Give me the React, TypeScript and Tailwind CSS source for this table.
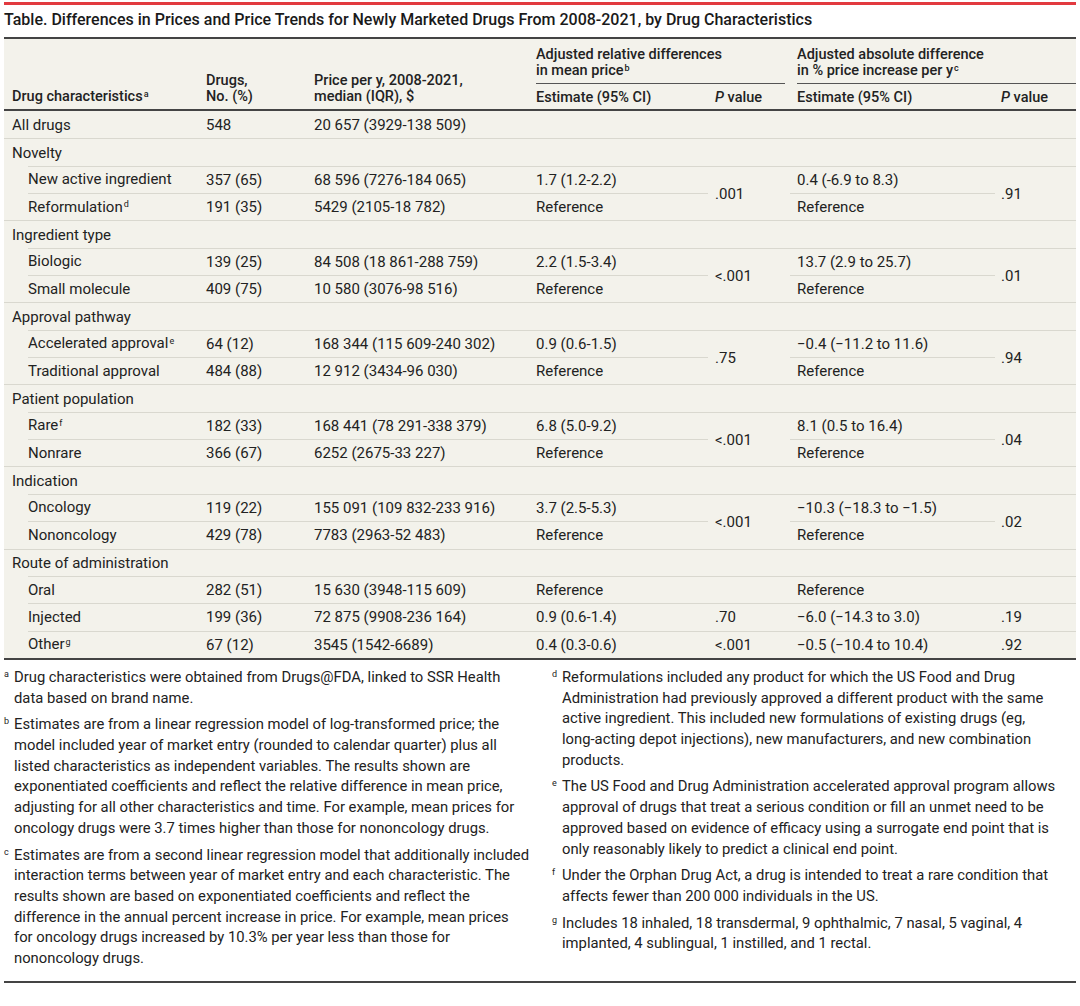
import type { ReactNode } from "react";

type SubRow = {
  label: string;
  sup?: string;
  n: string;
  price: string;
  e1: string;
  e2: string;
  p1?: string;
  p2?: string;
};

type Group = {
  title: string;
  p1?: string;
  p2?: string;
  rows: SubRow[];
};

const groups: Group[] = [
  {
    title: "Novelty",
    p1: ".001",
    p2: ".91",
    rows: [
      { label: "New active ingredient", n: "357 (65)", price: "68 596 (7276-184 065)", e1: "1.7 (1.2-2.2)", e2: "0.4 (-6.9 to 8.3)" },
      { label: "Reformulation", sup: "d", n: "191 (35)", price: "5429 (2105-18 782)", e1: "Reference", e2: "Reference" },
    ],
  },
  {
    title: "Ingredient type",
    p1: "<.001",
    p2: ".01",
    rows: [
      { label: "Biologic", n: "139 (25)", price: "84 508 (18 861-288 759)", e1: "2.2 (1.5-3.4)", e2: "13.7 (2.9 to 25.7)" },
      { label: "Small molecule", n: "409 (75)", price: "10 580 (3076-98 516)", e1: "Reference", e2: "Reference" },
    ],
  },
  {
    title: "Approval pathway",
    p1: ".75",
    p2: ".94",
    rows: [
      { label: "Accelerated approval", sup: "e", n: "64 (12)", price: "168 344 (115 609-240 302)", e1: "0.9 (0.6-1.5)", e2: "−0.4 (−11.2 to 11.6)" },
      { label: "Traditional approval", n: "484 (88)", price: "12 912 (3434-96 030)", e1: "Reference", e2: "Reference" },
    ],
  },
  {
    title: "Patient population",
    p1: "<.001",
    p2: ".04",
    rows: [
      { label: "Rare", sup: "f", n: "182 (33)", price: "168 441 (78 291-338 379)", e1: "6.8 (5.0-9.2)", e2: "8.1 (0.5 to 16.4)" },
      { label: "Nonrare", n: "366 (67)", price: "6252 (2675-33 227)", e1: "Reference", e2: "Reference" },
    ],
  },
  {
    title: "Indication",
    p1: "<.001",
    p2: ".02",
    rows: [
      { label: "Oncology", n: "119 (22)", price: "155 091 (109 832-233 916)", e1: "3.7 (2.5-5.3)", e2: "−10.3 (−18.3 to −1.5)" },
      { label: "Nononcology", n: "429 (78)", price: "7783 (2963-52 483)", e1: "Reference", e2: "Reference" },
    ],
  },
  {
    title: "Route of administration",
    rows: [
      { label: "Oral", n: "282 (51)", price: "15 630 (3948-115 609)", e1: "Reference", e2: "Reference", p1: "", p2: "" },
      { label: "Injected", n: "199 (36)", price: "72 875 (9908-236 164)", e1: "0.9 (0.6-1.4)", e2: "−6.0 (−14.3 to 3.0)", p1: ".70", p2: ".19" },
      { label: "Other", sup: "g", n: "67 (12)", price: "3545 (1542-6689)", e1: "0.4 (0.3-0.6)", e2: "−0.5 (−10.4 to 10.4)", p1: "<.001", p2: ".92" },
    ],
  },
];

// footnotes, broken where the printed table breaks them
const leftNotes: [string, string[]][] = [
  ["a", ["Drug characteristics were obtained from Drugs@FDA, linked to SSR Health", "data based on brand name."]],
  [
    "b",
    [
      "Estimates are from a linear regression model of log-transformed price; the",
      "model included year of market entry (rounded to calendar quarter) plus all",
      "listed characteristics as independent variables. The results shown are",
      "exponentiated coefficients and reflect the relative difference in mean price,",
      "adjusting for all other characteristics and time. For example, mean prices for",
      "oncology drugs were 3.7 times higher than those for nononcology drugs.",
    ],
  ],
  [
    "c",
    [
      "Estimates are from a second linear regression model that additionally included",
      "interaction terms between year of market entry and each characteristic. The",
      "results shown are based on exponentiated coefficients and reflect the",
      "difference in the annual percent increase in price. For example, mean prices",
      "for oncology drugs increased by 10.3% per year less than those for",
      "nononcology drugs.",
    ],
  ],
];

const rightNotes: [string, string[]][] = [
  [
    "d",
    [
      "Reformulations included any product for which the US Food and Drug",
      "Administration had previously approved a different product with the same",
      "active ingredient. This included new formulations of existing drugs (eg,",
      "long-acting depot injections), new manufacturers, and new combination",
      "products.",
    ],
  ],
  [
    "e",
    [
      "The US Food and Drug Administration accelerated approval program allows",
      "approval of drugs that treat a serious condition or fill an unmet need to be",
      "approved based on evidence of efficacy using a surrogate end point that is",
      "only reasonably likely to predict a clinical end point.",
    ],
  ],
  ["f", ["Under the Orphan Drug Act, a drug is intended to treat a rare condition that", "affects fewer than 200 000 individuals in the US."]],
  ["g", ["Includes 18 inhaled, 18 transdermal, 9 ophthalmic, 7 nasal, 5 vaginal, 4", "implanted, 4 sublingual, 1 instilled, and 1 rectal."]],
];

const cell = "h-[27.35px] border-t border-[#d9d8cf] align-middle";

function Sup({ children }: { children: ReactNode }) {
  return <sup className="ml-[1px] text-[9px]">{children}</sup>;
}

function GroupRows({ group }: { group: Group }) {
  const merged = group.p1 !== undefined;
  return (
    <>
      <tr>
        <td colSpan={7} className={`${cell} pl-2`}>
          {group.title}
        </td>
      </tr>
      {group.rows.map((r, i) => (
        <tr key={r.label}>
          <td className="h-[27.35px] bg-[linear-gradient(#d9d8cf,#d9d8cf)] bg-[length:172px_1px] bg-right-top bg-no-repeat pl-6 align-middle">
            {r.label}
            {r.sup && <Sup>{r.sup}</Sup>}
          </td>
          <td className={`${cell} pl-1.5`}>{r.n}</td>
          <td className={`${cell} pl-1.5`}>{r.price}</td>
          <td className={`${cell} pl-1.5`}>{r.e1}</td>
          {merged ? (
            i === 0 && (
              <td rowSpan={2} className="border-t border-[#d9d8cf] pl-[7px] align-middle">
                {group.p1}
              </td>
            )
          ) : (
            <td className={`${cell} pl-[7px]`}>{r.p1}</td>
          )}
          <td className={`${cell} pl-[7px]`}>{r.e2}</td>
          {merged ? (
            i === 0 && (
              <td rowSpan={2} className="border-t border-[#d9d8cf] pl-1.5 align-middle">
                {group.p2}
              </td>
            )
          ) : (
            <td className={`${cell} pl-1.5`}>{r.p2}</td>
          )}
        </tr>
      ))}
    </>
  );
}

function Note({ mark, lines }: { mark: string; lines: string[] }) {
  return (
    <div className="flex">
      <span className="w-[10px] shrink-0 pt-[1px] text-[9px] leading-[12px]">{mark}</span>
      <p className="flex-1">
        {lines.map((l) => (
          <span key={l} className="block whitespace-nowrap">
            {l}
          </span>
        ))}
      </p>
    </div>
  );
}

export default function App() {
  return (
    <div className="min-h-[1006px] w-[1080px] bg-white px-1 pt-[2px] font-['Roboto',sans-serif] text-[#222]">
      {/* red rule + title */}
      <div className="h-[3px] bg-[#e23a3f]" />
      <h1 className="mt-[5px] mb-[7px] text-[16px] leading-[20px] font-medium text-[#1a1a1a]">
        Table. Differences in Prices and Price Trends for Newly Marketed Drugs From 2008-2021, by Drug Characteristics
      </h1>

      <table className="w-full table-fixed border-separate border-spacing-0 border-t-2 border-b-2 border-[#444] bg-[#f3f2eb] text-[15px] leading-[20px]">
        <colgroup>
          <col className="w-[196px]" />
          <col className="w-[108px]" />
          <col className="w-[222px]" />
          <col className="w-[178px]" />
          <col className="w-[82px]" />
          <col className="w-[205px]" />
          <col className="w-[81px]" />
        </colgroup>
        <thead className="text-left text-[14.5px] leading-[16px] font-medium">
          <tr>
            <th rowSpan={2} className="border-b-2 border-[#444] pb-[4px] pl-2 align-bottom font-medium">
              Drug characteristics<Sup>a</Sup>
            </th>
            <th rowSpan={2} className="border-b-2 border-[#444] pb-[4px] pl-1.5 align-bottom font-medium">
              Drugs,
              <br />
              No. (%)
            </th>
            <th rowSpan={2} className="border-b-2 border-[#444] pb-[4px] pl-1.5 align-bottom font-medium">
              Price per y, 2008-2021,
              <br />
              median (IQR), $
            </th>
            <th colSpan={2} className="h-[45px] align-bottom font-medium">
              <div className="mr-[5px] ml-1.5 border-b border-[#555] pb-[4px]">
                Adjusted relative differences
                <br />
                in mean price<Sup>b</Sup>
              </div>
            </th>
            <th colSpan={2} className="h-[45px] align-bottom font-medium">
              <div className="ml-[7px] border-b border-[#555] pb-[4px]">
                Adjusted absolute difference
                <br />
                in % price increase per y<Sup>c</Sup>
              </div>
            </th>
          </tr>
          <tr>
            <th className="h-[27px] border-b-2 border-[#444] pl-1.5 pt-[3px] align-middle font-medium">Estimate (95% CI)</th>
            <th className="border-b-2 border-[#444] pl-[7px] pt-[3px] align-middle font-medium">
              <i>P</i> value
            </th>
            <th className="border-b-2 border-[#444] pl-[7px] pt-[3px] align-middle font-medium">Estimate (95% CI)</th>
            <th className="border-b-2 border-[#444] pl-1.5 pt-[3px] align-middle font-medium">
              <i>P</i> value
            </th>
          </tr>
        </thead>
        <tbody>
          <tr>
            <td className="h-[27.35px] pl-2 align-middle">All drugs</td>
            <td className="pl-1.5 align-middle">548</td>
            <td className="pl-1.5 align-middle">20 657 (3929-138 509)</td>
            <td />
            <td />
            <td />
            <td />
          </tr>
          {groups.map((g) => (
            <GroupRows key={g.title} group={g} />
          ))}
        </tbody>
      </table>

      {/* footnotes */}
      <div className="grid grid-cols-[526px_524px] gap-x-[22px] border-b-2 border-[#444] pt-[7px] pb-[12px] text-[14.8px] leading-[20.7px]">
        <div className="flex flex-col gap-[6px]">
          {leftNotes.map(([m, lines]) => (
            <Note key={m} mark={m} lines={lines} />
          ))}
        </div>
        <div className="flex flex-col gap-[6px]">
          {rightNotes.map(([m, lines]) => (
            <Note key={m} mark={m} lines={lines} />
          ))}
        </div>
      </div>
    </div>
  );
}
